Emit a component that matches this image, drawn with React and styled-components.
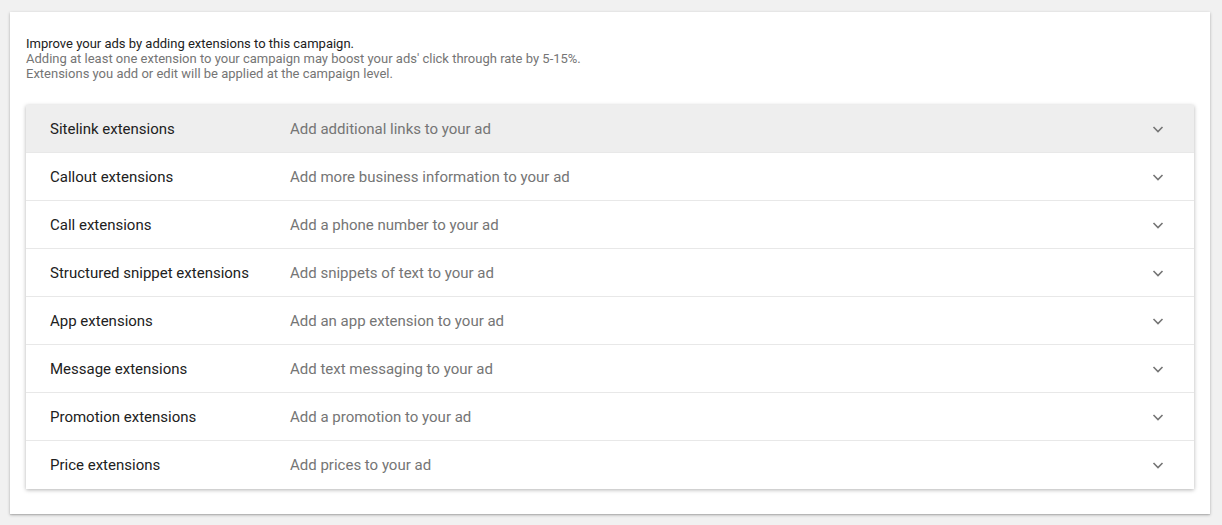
import React from "react";
import styled, { createGlobalStyle } from "styled-components";

const Global = createGlobalStyle`
  html, body { margin: 0; padding: 0; background: #f1f1f1; }
  body { font-family: Roboto, "Liberation Sans", Arial, sans-serif; }
`;

const Page = styled.div`
  padding: 12px 12px 12px 10px;
`;

const Card = styled.div`
  width: 1200px;
  box-sizing: border-box;
  background: #fff;
  box-shadow: 0 1px 3px rgba(0,0,0,0.25), 0 1px 1px rgba(0,0,0,0.1);
  padding: 24px 16px 25px 16px;
`;

const Intro = styled.div`
  font-size: 13px;
  line-height: 15px;
  color: #757575;
  margin-bottom: 24px;
`;

const IntroLead = styled.div`
  color: #212121;
`;

const List = styled.div`
  background: #fff;
  box-shadow: 0 1px 4px rgba(0,0,0,0.3);
`;

const Row = styled.div`
  display: flex;
  align-items: center;
  height: 48px;
  box-sizing: border-box;
  padding: 0 24px;
  background: ${p => (p.$active ? "#eeeeee" : "#fff")};
  border-bottom: ${p => (p.$last ? "none" : "1px solid #e8e8e8")};
  font-size: 15px;
`;

const Title = styled.div`
  width: 240px;
  flex: none;
  color: #212121;
`;

const Desc = styled.div`
  flex: 1;
  color: #757575;
`;

const Chevron = styled.svg`
  width: 24px;
  height: 24px;
  flex: none;
  fill: none;
  stroke: #757575;
  stroke-width: 1.6;
`;

const rows = [
  ["Sitelink extensions", "Add additional links to your ad"],
  ["Callout extensions", "Add more business information to your ad"],
  ["Call extensions", "Add a phone number to your ad"],
  ["Structured snippet extensions", "Add snippets of text to your ad"],
  ["App extensions", "Add an app extension to your ad"],
  ["Message extensions", "Add text messaging to your ad"],
  ["Promotion extensions", "Add a promotion to your ad"],
  ["Price extensions", "Add prices to your ad"],
];

export default function App() {
  return (
    <Page>
      <Global />
      <Card>
        <Intro>
          <IntroLead>Improve your ads by adding extensions to this campaign.</IntroLead>
          <div>Adding at least one extension to your campaign may boost your ads' click through rate by 5-15%.</div>
          <div>Extensions you add or edit will be applied at the campaign level.</div>
        </Intro>
        <List>
          {rows.map(([t, d], i) => (
            <Row key={t} $last={i === rows.length - 1} $active={i === 0}>
              <Title>{t}</Title>
              <Desc>{d}</Desc>
              <Chevron viewBox="0 0 24 24">
                <path d="M7.5 10l4.5 4.5 4.5-4.5" />
              </Chevron>
            </Row>
          ))}
        </List>
      </Card>
    </Page>
  );
}
